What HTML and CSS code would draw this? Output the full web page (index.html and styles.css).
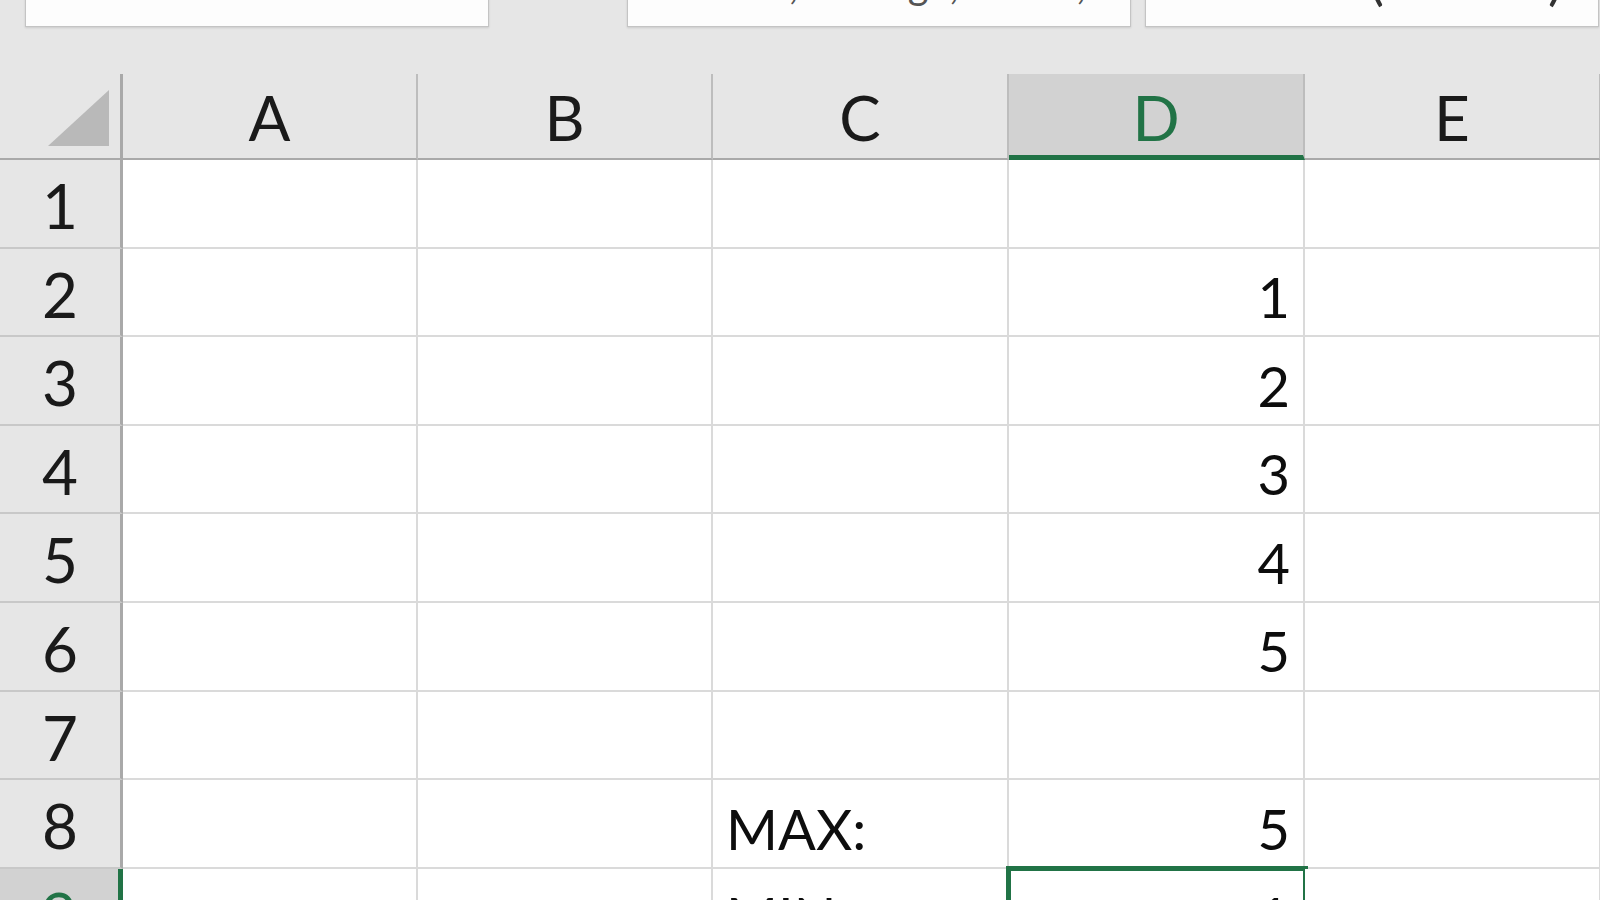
FILE: index.html
```html
<!DOCTYPE html>
<html lang="en">
<head>
<meta charset="utf-8">
<title>Excel – MAX / MIN</title>
<link rel="stylesheet" href="styles.css">
</head>
<body>
<div class="app">
  <div class="toolbar">
    <div class="box namebox"><span class="boxtext">D9</span></div>
    <div class="box fxbox"><span class="boxtext fxtext">Σ Sum, Average, Count, Max</span></div>
    <div class="box formula"><span class="boxtext formtext">=MIN(D2:D6)</span></div>
  </div>
  <div class="sheet">
    <div class="corner"><svg width="62" height="56" viewBox="0 0 62 56"><polygon points="61,0 61,56 0,56" fill="#b9b9b9"/></svg></div>
    <div class="colhead">A</div>
    <div class="colhead">B</div>
    <div class="colhead">C</div>
    <div class="colhead sel">D</div>
    <div class="colhead">E</div>

    <div class="rowhead">1</div><div class="cell"></div><div class="cell"></div><div class="cell"></div><div class="cell"></div><div class="cell"></div>
    <div class="rowhead">2</div><div class="cell"></div><div class="cell"></div><div class="cell"></div><div class="cell num">1</div><div class="cell"></div>
    <div class="rowhead">3</div><div class="cell"></div><div class="cell"></div><div class="cell"></div><div class="cell num">2</div><div class="cell"></div>
    <div class="rowhead">4</div><div class="cell"></div><div class="cell"></div><div class="cell"></div><div class="cell num">3</div><div class="cell"></div>
    <div class="rowhead">5</div><div class="cell"></div><div class="cell"></div><div class="cell"></div><div class="cell num">4</div><div class="cell"></div>
    <div class="rowhead">6</div><div class="cell"></div><div class="cell"></div><div class="cell"></div><div class="cell num">5</div><div class="cell"></div>
    <div class="rowhead">7</div><div class="cell"></div><div class="cell"></div><div class="cell"></div><div class="cell"></div><div class="cell"></div>
    <div class="rowhead">8</div><div class="cell"></div><div class="cell"></div><div class="cell label">MAX:</div><div class="cell num">5</div><div class="cell"></div>
    <div class="rowhead sel">9</div><div class="cell"></div><div class="cell"></div><div class="cell label">MIN:</div><div class="cell num active">1</div><div class="cell"></div>
  </div>
</div>
</body>
</html>
```
FILE: styles.css
```css
* { box-sizing: border-box; }
html, body {
  margin: 0;
  padding: 0;
  width: 1600px;
  height: 900px;
  overflow: hidden;
  background: #e6e6e6;
  font-family: Lato, "Open Sans", "Liberation Sans", sans-serif;
  color: #111;
}
.app {
  width: 1600px;
  height: 900px;
  overflow: hidden;
}
.toolbar {
  height: 74px;
  display: flex;
  align-items: flex-start;
}
.box {
  height: 38px;
  margin-top: -11px;
  background: #fdfdfd;
  border: 1px solid #c4c4c4;
  box-shadow: 0 1px 2px rgba(0,0,0,0.12);
  overflow: hidden;
  display: flex;
  align-items: flex-end;
}
.namebox {
  margin-left: 25px;
  width: 464px;
}
.fxbox {
  margin-left: 138px;
  width: 504px;
}
.formula {
  margin-left: 14px;
  width: 454px;
}
.boxtext {
  font-size: 56px;
  line-height: 1;
  white-space: nowrap;
  color: #333;
  margin-bottom: 19px;
}
.namebox .boxtext { padding-left: 40px; }
.fxtext { padding-left: 50px; font-size: 40px; margin-bottom: 22px; color: #555; }
.formtext { padding-left: 80px; margin-bottom: 20px; }

.sheet {
  display: grid;
  grid-template-columns: 123px 295px 295px 296px 296px 296px;
  grid-template-rows: 86px repeat(9, 88.6px);
  background: #fff;
  width: 1601px;
}
.corner {
  background: #e6e6e6;
  border-right: 3px solid #a9a9a9;
  border-bottom: 2px solid #a9a9a9;
  display: flex;
  align-items: flex-end;
  justify-content: flex-end;
  padding: 0 10px 12px 0;
}
.corner svg { display: block; }
.colhead {
  background: #e6e6e6;
  border-right: 2px solid #bdbdbd;
  border-bottom: 2px solid #a9a9a9;
  display: flex;
  align-items: center;
  justify-content: center;
  font-size: 62px;
  line-height: 1.2;
  color: #1a1a1a;
  padding-top: 2px;
}
.colhead.sel {
  background: #d2d2d2;
  color: #217346;
  border-bottom: 5px solid #217346;
  padding-top: 5px;
}
.rowhead {
  background: #e6e6e6;
  border-right: 3px solid #a9a9a9;
  border-bottom: 2px solid #c8c8c8;
  display: flex;
  align-items: center;
  justify-content: center;
  font-size: 62px;
  line-height: 1.2;
  color: #1a1a1a;
  padding-top: 4px;
}
.rowhead.sel {
  background: #d2d2d2;
  color: #217346;
  border-right: 5px solid #217346;
}
.cell {
  background: #fff;
  border-right: 2px solid #dadada;
  border-bottom: 2px solid #dadada;
  display: flex;
  align-items: flex-end;
  font-size: 56px;
  line-height: 1.2;
  color: #0d0d0d;
  padding: 0 12px 5px 12px;
  white-space: nowrap;
}
.cell.num { justify-content: flex-end; padding-right: 13px; }
.cell.label { justify-content: flex-start; padding-left: 13px; }
.cell.active {
  outline: 5px solid #217346;
  outline-offset: -2px;
}
```
